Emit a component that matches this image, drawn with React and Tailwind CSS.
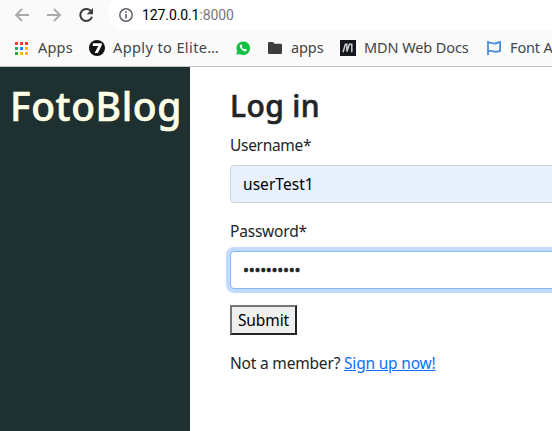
function Toolbar() {
  return (
    <div className="flex h-[30px] items-start bg-[#fafafa]">
      <svg className="h-[30px] w-[108px] shrink-0" viewBox="0 0 108 30" fill="none">
        <path d="M29 15H16M22 9l-6 6 6 6" stroke="#aaa" strokeWidth="1.8" />
        <path d="M47 15h13M54 9l6 6-6 6" stroke="#aaa" strokeWidth="1.8" />
        <path d="M91.2 11.4A6 6 0 1 0 92 16.8" stroke="#3c3c3c" strokeWidth="2" />
        <path d="M93 8v6.3h-6.3z" fill="#3c3c3c" />
      </svg>
      <div className="-mt-1 flex h-[34px] flex-1 items-center rounded-l-full bg-white pt-1 pl-[11px]">
        <svg className="size-[14px] shrink-0" viewBox="0 0 14 14" fill="none">
          <circle cx="7" cy="7" r="6.2" stroke="#5f6368" strokeWidth="1.5" />
          <path d="M7 6v4.5M7 3.3v1.6" stroke="#5f6368" strokeWidth="1.6" />
        </svg>
        <span className="ml-[9px] font-['Roboto',sans-serif] text-[14px] leading-5 tracking-[-0.1px] text-black">
          127.0.0.1<span className="text-[#777]">:8000</span>
        </span>
      </div>
    </div>
  );
}

function Bookmarks() {
  return (
    <div className="flex h-[37px] items-center overflow-hidden border-b border-[#c3c3c3] bg-[#fafafa] pl-[15px] text-[14.5px] leading-5 whitespace-nowrap text-[#444]">
      <svg className="h-[13px] w-[13px] shrink-0" viewBox="0 0 13 13" shapeRendering="crispEdges">
        <path d="M0 0h3v3H0zM5 0h3v3H5zM10 0h3v3h-3z" fill="#ef3f36" />
        <path d="M0 5h3v3H0zM0 10h3v3H0z" fill="#2fa35a" />
        <path d="M5 5h3v3H5z" fill="#1c87fb" />
        <path d="M10 5h3v3h-3zM5 10h3v3H5zM10 10h3v3h-3z" fill="#fbb50b" />
      </svg>
      <span className="-mt-[2px] ml-[10px] w-[51px] shrink-0 tracking-[0.2px]">Apps</span>
      <svg className="size-4 shrink-0" viewBox="0 0 16 16">
        <circle cx="8" cy="8" r="8" fill="#111" />
        <path d="M3.800 3.200H12.800V5.200L8.800 13H5.600L9.300 6H3.800z" fill="#fff" />
      </svg>
      <span className="-mt-[2px] ml-[8px] w-[123px] shrink-0 tracking-[0.4px]">Apply to Elite…</span>
      <svg className="size-[14px] shrink-0" viewBox="0 0 14 14">
        <path d="M.2 13.8l1-3.5A6.8 6.8 0 1 1 3.7 13z" fill="#12c143" />
        <path d="M4.7 3.5c-1.6 1-1 3.1 1 5s4 2.600 4.900 1.100c.4-.7.200-1-.2-1.200l-1.200-.6c-.5-.2-.7.700-1.200.6-.8-.2-1.900-1.300-2.100-1.900-.1-.4.600-.6.500-1.100l-.6-1.400c-.2-.5-.6-.7-1.100-.5z" fill="#fff" />
      </svg>
      <svg className="ml-[18px] h-[12px] w-[14px] shrink-0" viewBox="0 0 14 12">
        <path d="M1.300 0H5l1.500 1.700h6.200q1.300 0 1.300 1.300v7.700q0 1.300-1.300 1.300H1.300Q0 12 0 10.700V1.300Q0 0 1.300 0z" fill="#3d3d3d" />
      </svg>
      <span className="-mt-[2px] ml-[9px] w-[49px] shrink-0 tracking-[-0.1px]">apps</span>
      <svg className="size-4 shrink-0" viewBox="0 0 16 16" fill="none">
        <path d="M0 0h16v16H0z" fill="#14171c" />
        <path d="M3 12.200L5.400 4.200H6.800L6.900 11.500 9.400 4.200H11.800V12.200" stroke="#ccc" strokeWidth="1.500" />
      </svg>
      <span className="-mt-[2px] ml-[8px] w-[123px] shrink-0 tracking-[-0.1px]">MDN Web Docs</span>
      <svg className="h-[14px] w-[14px] shrink-0" viewBox="0 0 14 14" fill="none" stroke="#4c8bdb" strokeWidth="1.800">
        <path d="M1 0v14M1 2c3-1.500 4 .8 6.500.6S11 1.500 13.100 1v8.800c-2 .8-3.300 1.200-5.200.9S4 9 1 10.400" />
      </svg>
      <span className="-mt-[2px] ml-[9px] shrink-0 tracking-[-0.15px]">Font A</span>
    </div>
  );
}

export default function App() {
  return (
    <div className="flex h-[431px] w-[552px] flex-col overflow-hidden bg-white font-['Noto_Sans',sans-serif]">
      <Toolbar />
      <Bookmarks />
      <div className="flex min-h-0 flex-1">
        <aside className="w-[190px] shrink-0 bg-[#1e302f] pt-[15px] pl-[10px]">
          <h1 className="text-[39px] leading-[47px] font-medium tracking-[0.6px] whitespace-nowrap text-[#ffffe6] [-webkit-text-stroke:0.6px_#ffffe6]">FotoBlog</h1>
        </aside>
        <main className="w-[402px] shrink-0 pt-[20px] pl-[40px] text-[15.5px] leading-6 text-[#212529]">
          <h2 className="text-[30px] leading-[38px] font-medium tracking-[0.4px] [-webkit-text-stroke:0.6px_#212529]">Log in</h2>
          <label className="mt-[8px] block tracking-[-0.3px]">Username*</label>
          <div className="mt-[8px] flex h-[38px] items-center rounded-[4px] border border-[#ced4da] bg-[#e8f0fe] pb-px pl-[12px] tracking-[0.05px] text-black">userTest1</div>
          <label className="mt-[16px] block tracking-[-0.2px]">Password*</label>
          <div className="mt-[8px] flex h-[38px] items-center rounded-[4px] border border-[#86b7fe] bg-white pl-[12px] shadow-[0_0_0_4px_#c2dbfe]">
            <span className="text-[16px] leading-6 tracking-[-0.3px] [-webkit-text-stroke:0.5px_#212529]">••••••••••</span>
          </div>
          <button className="mt-[16px] block h-[30px] w-[67px] border-2 border-t-[#767676] border-r-[#212529] border-b-[#212529] border-l-[#767676] bg-[#efefef] leading-6 tracking-[-0.1px] text-black">Submit</button>
          <p className="mt-[16px] tracking-[-0.19px] whitespace-nowrap">
            Not a member? <a className="text-[#0d6efd] underline">Sign up now!</a>
          </p>
        </main>
      </div>
    </div>
  );
}
